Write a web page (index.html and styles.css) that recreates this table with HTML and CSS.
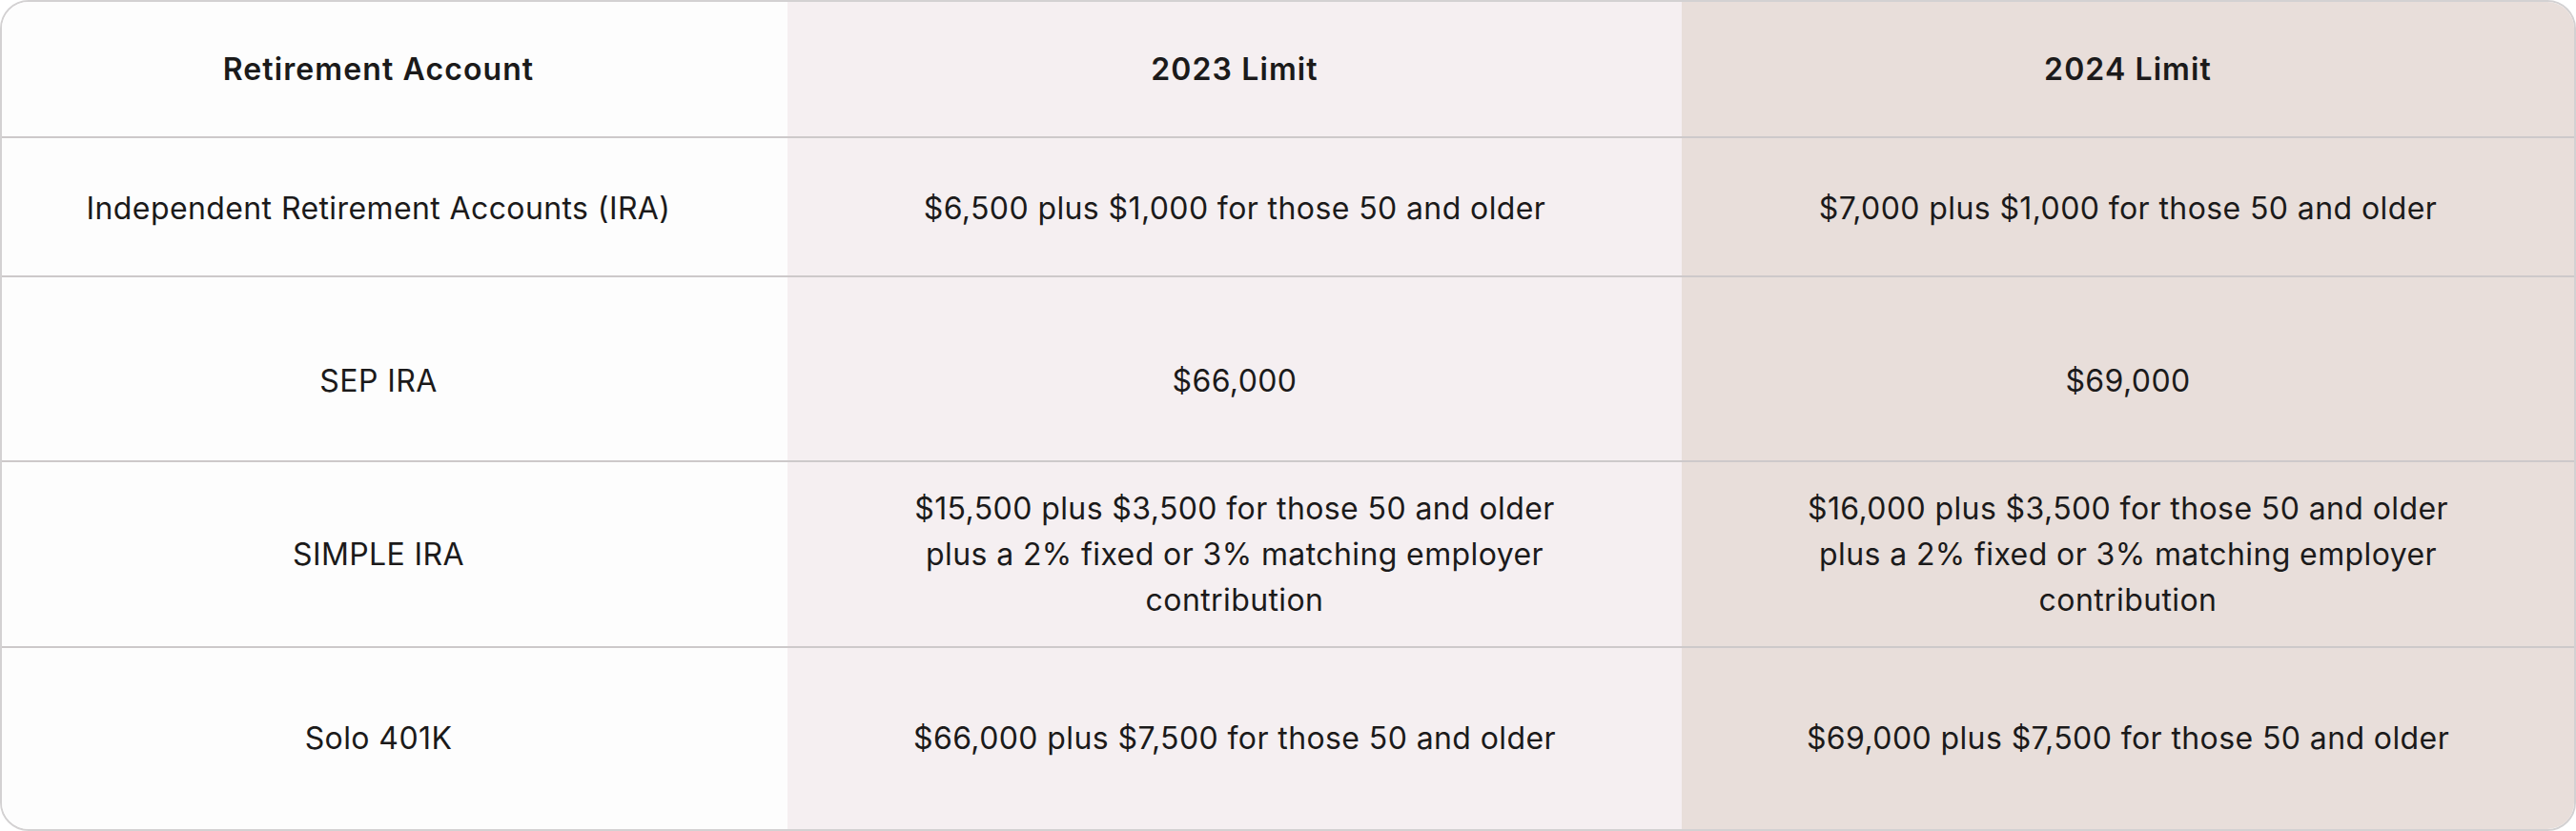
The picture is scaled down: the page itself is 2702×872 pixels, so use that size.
FILE: index.html
```html
<!DOCTYPE html>
<html lang="en">
<head>
<meta charset="utf-8">
<title>Retirement Account Limits</title>
<link rel="stylesheet" href="styles.css">
</head>
<body>
<div class="table">
  <div class="cell head c1">Retirement Account</div>
  <div class="cell head c2">2023 Limit</div>
  <div class="cell head c3">2024 Limit</div>

  <div class="cell c1 first">Independent Retirement Accounts (IRA)</div>
  <div class="cell c2 first">$6,500 plus $1,000 for those 50 and older</div>
  <div class="cell c3 first">$7,000 plus $1,000 for those 50 and older</div>

  <div class="cell c1 low">SEP IRA</div>
  <div class="cell c2 low">$66,000</div>
  <div class="cell c3 low">$69,000</div>

  <div class="cell c1">SIMPLE IRA</div>
  <div class="cell c2">$15,500 plus $3,500 for those 50 and older plus a 2% fixed or 3% matching employer contribution</div>
  <div class="cell c3">$16,000 plus $3,500 for those 50 and older plus a 2% fixed or 3% matching employer contribution</div>

  <div class="cell c1 last">Solo 401K</div>
  <div class="cell c2 last">$66,000 plus $7,500 for those 50 and older</div>
  <div class="cell c3 last">$69,000 plus $7,500 for those 50 and older</div>
</div>
</body>
</html>
```
FILE: styles.css
```css
html, body {
  margin: 0;
  padding: 0;
  background: #ffffff;
}

.table {
  box-sizing: border-box;
  width: 2702px;
  height: 872px;
  border: 2px solid #d3d1d2;
  border-radius: 30px;
  overflow: hidden;
  display: grid;
  grid-template-columns: 824px 938px 936px;
  grid-template-rows: 143px 146px 194px 195px 190px;
  font-family: "Inter", "Liberation Sans", sans-serif;
  font-size: 32px;
  line-height: 48px;
  letter-spacing: 0.4px;
  color: #1b1a1a;
}

.cell {
  box-sizing: border-box;
  display: flex;
  align-items: center;
  justify-content: center;
  text-align: center;
  padding-left: 110px;
  padding-right: 110px;
  border-bottom: 2px solid #cdc9ca;
}

.cell.last {
  border-bottom: none;
}

.cell.first {
  padding-top: 4px;
}

.cell.low {
  padding-top: 26px;
}

.head {
  font-weight: 600;
  letter-spacing: 1.1px;
}

.c1 {
  background: #fdfdfd;
  padding-left: 6px;
  padding-right: 40px;
}

.c2 {
  background: #f5eff1;
}

.c3 {
  background: #e8deda;
}
```
